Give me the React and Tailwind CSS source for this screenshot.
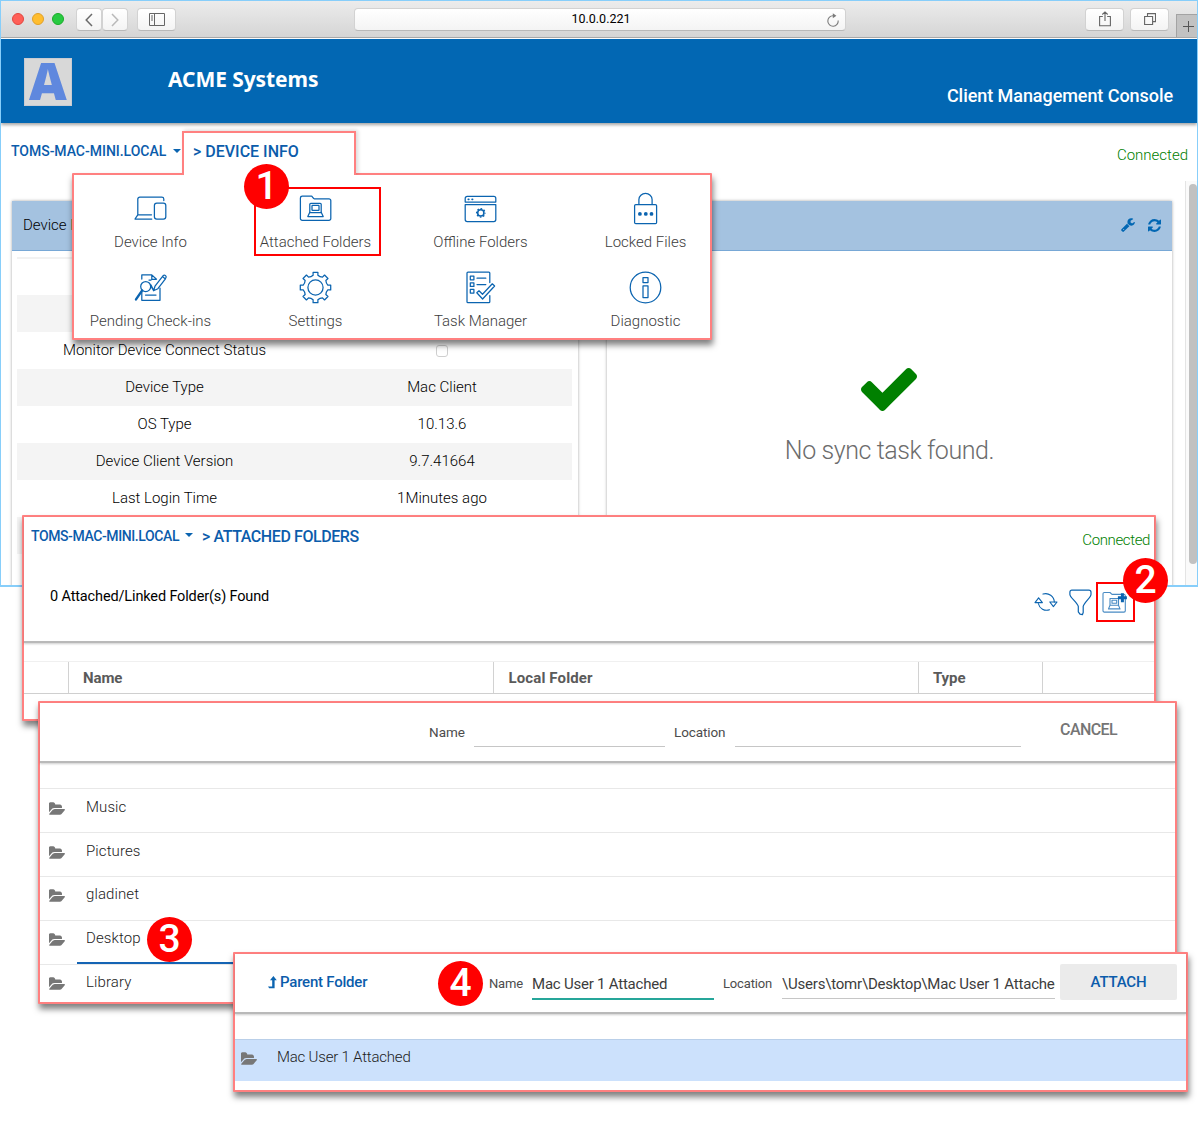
import React from "react";

const LINE = "#0b64b0";

/* ---------- icons ---------- */

function gearPath(cx, cy, outer, inner, teeth, half) {
  const pt = (r, deg) => {
    const a = (deg * Math.PI) / 180;
    return `${(cx + r * Math.sin(a)).toFixed(2)} ${(cy - r * Math.cos(a)).toFixed(2)}`;
  };
  const step = 360 / teeth;
  let d = `M${pt(outer, -half)}`;
  for (let i = 0; i < teeth; i++) {
    const a = i * step;
    d += ` L${pt(outer, a + half)} L${pt(inner + 0.5, a + half + 2)}`;
    d += ` Q${pt(inner - 0.6, a + step / 2)} ${pt(inner + 0.5, a + step - half - 2)}`;
    d += ` L${pt(outer, a + step - half)}`;
  }
  return d + "Z";
}

function Line({ children, w = 33, h = 33, sw = 1.25 }) {
  return (
    <svg
      width={w}
      height={h}
      viewBox={`0 0 ${w} ${h}`}
      fill="none"
      stroke={LINE}
      strokeWidth={sw}
      strokeLinejoin="round"
      strokeLinecap="round"
      className="block shrink-0"
    >
      {children}
    </svg>
  );
}

const DeviceIcon = () => (
  <Line>
    <path d="M29.8 8.5V7a2 2 0 0 0-2-1.9H5.8a2 2 0 0 0-2 2V22.6M3.8 22.8H17.5M3.8 22.8 1 27H17.8" />
    <rect x="20.4" y="11.2" width="11.4" height="16" rx="2.4" />
  </Line>
);

const FolderIcon = () => (
  <Line>
    <path d="M1.4 6a1.8 1.8 0 0 1 1.8-1.8h9.2c1 0 1.7 2.6 3 2.6h14.6a1.8 1.8 0 0 1 1.8 1.8V26.5a1.8 1.8 0 0 1-1.8 1.8H3.2a1.8 1.8 0 0 1-1.8-1.8z" />
    <path d="M10.800 20.300V12.300a1 1 0 0 1 1-1H21.200a1 1 0 0 1 1 1V20.300" />
    <rect x="13" y="13.400" width="7" height="5" rx=".5" />
    <path d="M10.800 20.300 8.800 24.500H24.200L22.200 20.300M10.800 20.600H22.200" />
  </Line>
);

const OfflineIcon = () => (
  <Line>
    <path d="M1.2 10V6.400a2 2 0 0 1 2-2H29.800a2 2 0 0 1 2 2V10z" />
    <path d="M1.2 12.600H31.800V27.600a2 2 0 0 1-2 2H3.200a2 2 0 0 1-2-2z" />
    <path d="M4.300 7.300h.5M8.100 7.300h.5" strokeWidth="1.700" />
    <circle cx="16.800" cy="20.900" r="3.100" strokeWidth="1.500" />
    <circle
      cx="16.800"
      cy="20.900"
      r="4.200"
      strokeWidth="1.300"
      strokeLinecap="butt"
      strokeDasharray="1.650 1.649"
      strokeDashoffset="0.800"
    />
  </Line>
);

const LockIcon = () => (
  <Line>
    <rect x="5.600" y="12.500" width="22" height="19.200" rx="1.200" />
    <path d="M9.900 12.300V7.500a6.600 6.100 0 0 1 13.200 0V12.300" />
    <g fill={LINE} stroke="none">
      <circle cx="10.900" cy="21.900" r="1.900" />
      <circle cx="16.800" cy="21.900" r="1.900" />
      <circle cx="22.500" cy="21.900" r="1.900" />
    </g>
  </Line>
);

const PendingIcon = () => (
  <Line>
    <path d="M7.800 8V3.900H17.800L22.500 8.200M17.800 3.900V8.400H22M7.800 20.500V29.300H26V17M11.500 24H22M15 9h2" />
    <circle cx="11.700" cy="15.600" r="5" />
    <path d="M8.200 19.400 2 28.400" strokeWidth="2.400" />
    <path d="M16.500 14.500l3 4.800L17 14M19.500 19.800l1.500-4.600 7.400-9.600 3 2.300-7.500 9.800zM28.400 5.600l.8-1c1.600-1.200 3.600.6 2.600 2.200l-.6.900" />
  </Line>
);

const SettingsIcon = () => (
  <Line>
    <path d={gearPath(16.5, 16.5, 15.4, 12, 8, 9)} />
    <circle cx="16.500" cy="16.500" r="7.600" />
  </Line>
);

const TaskIcon = () => (
  <Line>
    <path d="M25.800 11.500V2a1 1 0 0 0-1-1H4a1 1 0 0 0-1 1V30.700a1 1 0 0 0 1 1H24.800a1 1 0 0 0 1-1V24.500" />
    <path d="M6.300 5.200h3.600v3.600H6.300zM6.300 11.800h3.600v3.600H6.300zM6.300 18.400h3.600v3.600H6.300zM13 7.200h8.800M13 13.500h8.800" />
    <path d="M12.800 21.800l2.200-2 3.500 3.500L28.300 12.800l2.300 2.200L18.600 28z" />
  </Line>
);

const InfoIcon = () => (
  <Line>
    <circle cx="16.500" cy="16.500" r="15.300" />
    <rect x="14" y="6.600" width="5" height="5" />
    <rect x="14" y="14.900" width="5" height="11.600" />
  </Line>
);

const RefreshLineIcon = () => (
  <Line w={24} h={20} sw={1.1}>
    <path d="M9 2.100a8.600 8.600 0 0 1 11.300 8M15.500 17.800A8.600 8.600 0 0 1 4.300 11.500" />
    <path d="M4.600 5.800 1 10.600H8.400zM19.400 14.600 15.800 10H23z" />
  </Line>
);

const FilterIcon = () => (
  <Line w={23} h={27} sw={1.2}>
    <path d="M2.800 1.200H19.800C21 1.200 22 2 22 3.200V5.400C22 8.500 14.800 13.500 14.200 17.400V23.500L13.400 25.700 11 25.200 9.300 22.800V17.400C8.600 13.500.9 8.500.9 5.400V3.200C.9 2 1.800 1.200 2.800 1.200z" />
  </Line>
);

const AddFolderIcon = () => (
  <Line w={27} h={23} sw={1.1}>
    <g opacity="0.75">
      <path d="M1 2.800A1.300 1.300 0 0 1 2.300 1.500H8l2 1.900H22A1.300 1.300 0 0 1 23.300 4.700V19.800A1.300 1.300 0 0 1 22 21.100H2.300A1.300 1.300 0 0 1 1 19.800z" />
      <path d="M8 7.500h8.500v6.700H8zM10 9.200h4.700v3H10zM8 14.200 6.500 17.900H18L16.500 14.200" />
    </g>
    <path d="M20.400 2.200V11.200M15.900 6.700H24.900" strokeWidth="3" strokeLinecap="butt" />
  </Line>
);

function Glyph({ box, w, h, d, className }) {
  return (
    <svg width={w} height={h} viewBox={box} fill="currentColor" className={`block shrink-0 ${className || ""}`}>
      <path d={d} />
    </svg>
  );
}

const CHECK =
  "M1671 566q0 40-28 68l-724 724-136 136q-28 28-68 28t-68-28l-136-136-362-362q-28-28-28-68t28-68l136-136q28-28 68-28t68 28l294 295 656-657q28-28 68-28t68 28l136 136q28 28 28 68z";
const WRENCH =
  "M448 1472q0-26-19-45t-45-19-45 19-19 45 19 45 45 19 45-19 19-45zm644-420l-682 682q-37 37-90 37-52 0-91-37l-106-108q-38-36-38-90 0-53 38-91l681-681q39 98 114.500 173.500t173.500 114.500zm634-435q0 39-23 106-47 134-164.500 217.500t-258.500 83.500q-185 0-316.500-131.500t-131.500-316.500 131.500-316.500 316.500-131.500q58 0 121.500 16.500t107.500 46.500q16 11 16 28t-16 28l-293 169v224l193 107q5-3 79-48.500t135.500-81 70.500-35.500q15 0 23.500 10t8.500 25z";
const REFRESH =
  "M1639 1056q0 5-1 7-64 268-268 434.500t-478 166.500q-146 0-282.500-55t-243.500-157l-129 129q-19 19-45 19t-45-19-19-45v-448q0-26 19-45t45-19h448q26 0 45 19t19 45-19 45l-137 137q71 66 161 102t187 36q134 0 250-65t186-179q11-17 53-117 8-23 30-23h192q13 0 22.500 9.500t9.500 22.500zm25-800v448q0 26-19 45t-45 19h-448q-26 0-45-19t-19-45 19-45l138-138q-148-137-349-137-134 0-250 65t-186 179q-11 17-53 117-8 23-30 23h-199q-13 0-22.500-9.500t-9.500-22.500v-7q65-268 270-434.500t480-166.500q146 0 284 55.500t245 156.500l130-129q19-19 45-19t45 19 19 45z";
const FOLDER_OPEN =
  "M1815 952q0 31-31 66l-336 396q-43 51-120.500 86.500t-143.500 35.500h-1088q-34 0-60.500-13t-26.500-43q0-31 31-66l336-396q43-51 120.500-86.500t143.500-35.500h1088q34 0 60.500 13t26.500 43zm-343-344v160h-832q-94 0-197 47.500t-164 119.500l-337 396-5 6q0-4-.5-12.500t-.5-12.500v-960q0-92 66-158t158-66h320q92 0 158 66t66 158v32h544q92 0 158 66t66 158z";

const OpenFolder = () => (
  <Glyph box="0 128 1815 1408" w={16} h={13} d={FOLDER_OPEN} className="text-[#777777]" />
);

/* ---------- shared pieces ---------- */

function Badge({ n, className }) {
  return (
    <div
      className={`absolute z-30 flex h-[45px] w-[45px] items-center justify-center rounded-full bg-[#ff0000] text-[39px] leading-none font-medium text-white ${className}`}
    >
      {n}
    </div>
  );
}

function Caret({ className }) {
  return (
    <svg width="8" height="4" viewBox="0 0 8 4" className={`block shrink-0 ${className}`}>
      <path d="M0 0h8L4 4z" fill={LINE} />
    </svg>
  );
}

function ToolButton({ children, className }) {
  return (
    <div
      className={`flex h-[23px] items-center justify-center rounded-[4px] border border-[#d2d2d2] border-b-[#b9b9b9] bg-linear-to-b from-white to-[#f4f4f4] ${className}`}
    >
      {children}
    </div>
  );
}

const FLOAT =
  "absolute flex flex-col rounded-[1px] border-2 border-[#ff8080] bg-white shadow-[1px_5px_6px_rgba(0,0,0,0.5)]";

/* ---------- browser window ---------- */

function Toolbar() {
  return (
    <div className="flex h-[37px] items-start border-b border-[#a9a9a9] bg-linear-to-b from-[#ececec] to-[#d5d5d5]">
      <div className="mt-3 ml-[11px] flex gap-2">
        <div className="h-3 w-3 rounded-full border border-[#e2463f] bg-[#ff5f57]" />
        <div className="h-3 w-3 rounded-full border border-[#e0a029] bg-[#ffbd2e]" />
        <div className="h-3 w-3 rounded-full border border-[#1aab29] bg-[#28ca41]" />
      </div>
      <ToolButton className="mt-[7px] ml-3 w-[26px]">
        <svg width="8" height="14" viewBox="0 0 8 14" fill="none" stroke="#6b6b6b" strokeWidth="1.500">
          <path d="M7 1 1.200 7 7 13" />
        </svg>
      </ToolButton>
      <ToolButton className="mt-[7px] w-[26px]">
        <svg width="8" height="14" viewBox="0 0 8 14" fill="none" stroke="#b9b9b9" strokeWidth="1.500">
          <path d="M1 1 6.800 7 1 13" />
        </svg>
      </ToolButton>
      <ToolButton className="mt-[7px] ml-[9px] w-[39px]">
        <svg width="16" height="13" viewBox="0 0 16 13" fill="none" stroke="#666" strokeWidth="1">
          <path d="M.5.5h15v12H.5zM5.500.5v12M2 3h2M2 5h2M2 7h2" />
        </svg>
      </ToolButton>
      <ToolButton className="mt-[7px] ml-[178px] w-[492px]">
        <span className="flex-1 pl-[4px] text-center text-[12.500px] leading-none text-black">10.0.0.221</span>
        <svg width="13" height="14" viewBox="0 0 13 14" fill="none" stroke="#7a7a7a" strokeWidth="1.100" className="-ml-4 mr-[5px]">
          <path d="M11.200 7.500A5.200 5.200 0 1 1 6 2.800H7.500" />
          <path d="M5.800.3 9.400 2.800 5.800 5.300z" fill="#7a7a7a" stroke="none" />
        </svg>
      </ToolButton>
      <ToolButton className="mt-[7px] ml-[239px] w-[39px]">
        <svg width="12" height="16" viewBox="0 0 12 16" fill="none" stroke="#666" strokeWidth="1.100" className="-mt-0.5">
          <path d="M3.800 5.500H.6v9.300h10.800V5.500H8.200M6 10V1M3.300 3.500 6 .9 8.700 3.500" />
        </svg>
      </ToolButton>
      <ToolButton className="mt-[7px] ml-[6px] w-[39px]">
        <svg width="12" height="12" viewBox="0 0 12 12" fill="none" stroke="#666" strokeWidth="1.100" className="-mt-px">
          <path d="M.6 3.500h8v8h-8zM3.500 3.500V.6h8v8H8.600" />
        </svg>
      </ToolButton>
      <div className="mt-[13px] ml-[7px] flex h-[23px] flex-1 items-center justify-center border-t border-l border-[#a3a3a3] bg-[#c2c2c2] pl-0.5">
        <svg width="11" height="11" viewBox="0 0 11 11" stroke="#555" strokeWidth="1" className="shrink-0">
          <path d="M5.500 0v11M0 5.500h11" />
        </svg>
      </div>
    </div>
  );
}

function Header() {
  return (
    <div className="relative mt-px flex h-[84px] shrink-0 items-start bg-[#0267b3] text-white shadow-[0_2px_3px_rgba(0,0,0,0.35)]">
      <div className="mt-[19px] ml-[23px] flex h-12 w-12 items-center justify-center border border-[#c9cbd2] bg-[#d8d8d8]">
        <span className="-mt-[5px] font-['Open_Sans',sans-serif] text-[52px] leading-none font-extrabold text-[#5f88de]">
          A
        </span>
      </div>
      <span className="mt-[26px] ml-24 font-['Noto_Sans','Open_Sans',sans-serif] text-[21px] leading-7 font-bold tracking-[-0.08px]">
        ACME Systems
      </span>
      <span className="mt-[45px] mr-6 ml-auto text-[18px] leading-6 font-medium tracking-[-0.06px]">
        Client Management Console
      </span>
    </div>
  );
}

const ROWS = [
  ["", ""],
  ["", ""],
  ["Monitor Device Connect Status", "box"],
  ["Device Type", "Mac Client"],
  ["OS Type", "10.13.6"],
  ["Device Client Version", "9.7.41664"],
  ["Last Login Time", "1Minutes ago"],
  ["", ""],
];

function DeviceCard() {
  return (
    <div className="h-[400px] w-[566px] shrink-0 bg-white shadow-[0_0_3px_rgba(0,0,0,0.35)]">
      <div className="flex h-[50px] items-center border-b border-[#78a8d6] bg-[#a4c2e0] pl-[11px] text-[15px] font-light text-black">
        Device Info
      </div>
      <div className="mt-[6px] mr-[6px] ml-[5px] border-t-2 border-[#f2f2f2] text-[15px] leading-none font-light text-black">
        {ROWS.map(([label, value], i) => (
          <div key={i} className="flex h-[37px] items-center even:bg-[#f4f4f4] first:h-[36px]">
            <div className="w-[295px] text-center">{label}</div>
            <div className="flex w-[260px] justify-center">
              {value === "box" ? <div className="h-3 w-3 rounded-[3px] border border-[#cfcfcf]" /> : value}
            </div>
          </div>
        ))}
      </div>
    </div>
  );
}

function SyncCard() {
  return (
    <div className="flex h-[400px] w-[565px] shrink-0 flex-col items-center bg-white shadow-[0_0_3px_rgba(0,0,0,0.35)]">
      <div className="flex h-[50px] w-full items-center justify-end gap-[13px] border-b border-[#78a8d6] bg-[#a4c2e0] pr-[11px] pb-px text-[#0267b3]">
        <Glyph box="64 100 1680 1680" w={14} h={14} d={WRENCH} />
        <Glyph box="128 128 1536 1536" w={13} h={13} d={REFRESH} />
      </div>
      <Glyph box="121 334 1550 1188" w={56} h={43} d={CHECK} className="mt-[117px] mr-0.5 text-[#008000]" />
      <div className="mt-[24px] text-[25px] leading-8 font-light tracking-[-0.42px] text-[#6c6c6c]">No sync task found.</div>
    </div>
  );
}

function BrowserWindow() {
  return (
    <div className="absolute top-0 left-0 flex h-[587px] w-[1198px] flex-col overflow-hidden border border-b-2 border-[#87cefa] bg-white">
      <Toolbar />
      <Header />
      <div className="flex h-[58px] shrink-0 items-start pt-[20px] pl-[10px] leading-4">
        <span className="text-[14px] font-medium tracking-[-0.02px] text-[#0b5cab]">TOMS-MAC-MINI.LOCAL</span>
        <Caret className="mt-[6px] ml-[7px]" />
        <span className="mt-[4px] mr-[9px] ml-auto text-[15px] font-light text-[#008000]">Connected</span>
      </div>
      <div className="flex h-[405px]">
        <div className="flex flex-1 gap-[29px] pt-5 pl-[11px]">
          <DeviceCard />
          <SyncCard />
        </div>
        <div className="w-3 shrink-0 border-l border-[#e4e4e4] bg-[#fafafa] pt-[3px] pl-[3px]">
          <div className="h-[380px] w-2 rounded-full bg-[#c1c1c1]" />
        </div>
      </div>
    </div>
  );
}

/* ---------- step 1: section menu ---------- */

const MENU = [
  [DeviceIcon, "Device Info"],
  [FolderIcon, "Attached Folders"],
  [OfflineIcon, "Offline Folders"],
  [LockIcon, "Locked Files"],
  [PendingIcon, "Pending Check-ins"],
  [SettingsIcon, "Settings"],
  [TaskIcon, "Task Manager"],
  [InfoIcon, "Diagnostic"],
];

function SectionMenu() {
  return (
    <>
      <div className="absolute top-[173px] left-[72px] h-[167px] w-[640px] rounded-[1px] border-2 border-[#ff8080] bg-white shadow-[1px_5px_6px_rgba(0,0,0,0.5)]">
        <div className="-ml-[6px] grid w-[660px] grid-cols-4 pt-[17px]">
          {MENU.map(([Icon, label]) => (
            <div key={label} className="flex h-[79px] flex-col items-center">
              <Icon />
              <span className="mt-[8px] text-[15px] leading-[18px] font-light text-[#3c3c3c]">{label}</span>
            </div>
          ))}
        </div>
      </div>
      <div className="absolute top-[131px] left-[182px] h-[44px] w-[174px] border-2 border-b-0 border-[#ff8080] bg-white pt-[9px] pl-[9px] text-[16px] leading-5 font-medium text-[#0b5cab] shadow-[2px_-1px_4px_rgba(0,0,0,0.15)]">
        &gt; DEVICE INFO
      </div>
      <div className="absolute top-[175px] left-[184px] h-[5px] w-[180px] bg-white" />
      <div className="absolute top-[187px] left-[254px] h-[69px] w-[127px] border-2 border-[#ff0000]" />
      <Badge n="1" className="top-[164px] left-[244px]" />
    </>
  );
}

/* ---------- step 2: attached folders ---------- */

function AttachedFolders() {
  return (
    <div className={`${FLOAT} top-[515px] left-[22px] h-[206px] w-[1134px]`}>
      <div className="flex h-[126px] shrink-0 flex-col border-b-2 border-[#b9b9b9] shadow-[0_1px_2px_rgba(0,0,0,0.2)]">
        <div className="flex h-[52px] items-start pt-[9px] pr-1 pl-[7px] leading-5 font-medium text-[#0b5cab]">
          <span className="text-[14px] tracking-[-0.4px]">TOMS-MAC-MINI.LOCAL</span>
          <Caret className="mt-[7px] ml-[6px]" />
          <span className="mt-px ml-[9px] text-[16px] tracking-[-0.42px]">&gt; ATTACHED FOLDERS</span>
          <span className="mt-[4px] ml-auto text-[15px] font-light tracking-[-0.38px] text-[#008000]">Connected</span>
        </div>
        <div className="flex items-start pl-[26px]">
          <span className="mt-[18px] text-[14.500px] leading-5 tracking-[-0.14px] text-black">
            0 Attached/Linked Folder(s) Found
          </span>
          <div className="mt-[13px] mr-[19px] ml-auto flex items-center">
            <RefreshLineIcon />
            <div className="ml-[11px]">
              <FilterIcon />
            </div>
            <div className="ml-[4px] flex h-10 w-[39px] items-center border-2 border-[#ff0000] pl-[4px]">
              <AddFolderIcon />
            </div>
          </div>
        </div>
      </div>
      <div className="mt-[18px] flex h-[33px] border-t border-b border-t-[#f0f0f0] border-b-[#cfcfcf] text-[15px] leading-[32px] font-bold tracking-[-0.1px] text-[#5a5a5a]">
        <div className="w-[44px]" />
        <div className="w-[425px] border-l border-[#d2d2d2] pl-[14px]">Name</div>
        <div className="w-[425px] border-l border-[#d2d2d2] pl-[14.500px] tracking-[0.12px]">Local Folder</div>
        <div className="w-[124px] border-l border-[#d2d2d2] pl-[14px]">Type</div>
        <div className="flex-1 border-l border-[#d2d2d2]" />
      </div>
    </div>
  );
}

/* ---------- step 3: folder list ---------- */

function FolderRow({ name, active }) {
  return (
    <div className="relative flex h-[43.800px] shrink-0 items-start border-t border-[#e8e8e8]">
      <div className="mt-[12.500px] ml-[9px]">
        <OpenFolder />
      </div>
      <span className="mt-[7.500px] ml-[21px] text-[15px] leading-5 font-light tracking-[0.1px] text-[#222]">{name}</span>
      {active && <div className="absolute right-0 bottom-0 left-[37px] h-[2px] bg-[#1464b4]" />}
    </div>
  );
}

function FolderPicker() {
  return (
    <div className={`${FLOAT} top-[701px] left-[38px] h-[303px] w-[1139px]`}>
      <div className="mb-[25.400px] flex h-[60px] shrink-0 items-start border-b-2 border-[#b9b9b9] text-[13.500px] leading-5 text-[#4c4c4c] shadow-[0_1px_2px_rgba(0,0,0,0.2)]">
        <div className="mt-[19px] ml-[389px] w-[45px]">Name</div>
        <div className="mt-[43px] h-px w-[191px] bg-[#c6c6c6]" />
        <div className="mt-[19px] ml-[9px] w-[61px] tracking-[-0.1px]">Location</div>
        <div className="mt-[43px] h-px w-[286px] bg-[#c6c6c6]" />
        <span className="mt-[17px] mr-[58px] ml-auto text-[16px] font-medium tracking-[-0.6px] text-[#757575]">CANCEL</span>
      </div>
      <div className="flex flex-1 flex-col overflow-hidden">
        <FolderRow name="Music" />
        <FolderRow name="Pictures" />
        <FolderRow name="gladinet" />
        <FolderRow name="Desktop" active />
        <FolderRow name="Library" />
      </div>
    </div>
  );
}

/* ---------- step 4: attach form ---------- */

function AttachForm() {
  return (
    <div className={`${FLOAT} top-[952px] left-[233px] h-[140px] w-[955px]`}>
      <div className="flex h-[60px] shrink-0 items-start border-b-2 border-[#b9b9b9] leading-5 shadow-[0_1px_2px_rgba(0,0,0,0.2)]">
        <svg width="9" height="13" viewBox="0 0 9 13" className="mt-[22px] ml-[33px]">
          <path d="M5.400 0 8.800 4.200H6.600V12.300H1.200L0 10.400H4.200V4.200H2z" fill={LINE} />
        </svg>
        <div className="mt-[18px] ml-[3px] w-[209px] text-[15px] font-medium tracking-[-0.22px] text-[#0b5cab]">
          Parent Folder
        </div>
        <div className="mt-[20px] w-[43px] text-[13px] tracking-[-0.15px] text-[#4c4c4c]">Name</div>
        <div className="mt-[20px] h-[26px] w-[182px] border-b-2 border-[#26a69a] text-[15px] tracking-[-0.22px] text-[#3c3c3c]">
          Mac User 1 Attached
        </div>
        <div className="mt-[20px] ml-[9px] w-[59px] text-[13px] tracking-[-0.15px] text-[#4c4c4c]">Location</div>
        <div className="mt-[20px] h-[25px] w-[273px] overflow-hidden border-b border-[#c6c6c6] text-[15px] tracking-[-0.2px] text-[#3c3c3c]">
          \Users\tomr\Desktop\Mac User 1 Attached
        </div>
        <div className="mt-[10px] ml-[5px] flex h-9 w-[117px] items-center justify-center rounded-[2px] bg-[#ebebeb] text-[15px] font-medium tracking-[-0.2px] text-[#0b5cab]">
          ATTACH
        </div>
      </div>
      <div className="mt-[25px] flex h-[42px] items-start border-t border-[#b9cfe9] bg-[#cce1fc]">
        <div className="mt-[12px] ml-[6px]">
          <OpenFolder />
        </div>
        <span className="mt-[7px] ml-5 text-[15px] leading-5 font-light tracking-[-0.2px] text-[#222]">
          Mac User 1 Attached
        </span>
      </div>
    </div>
  );
}

export default function App() {
  return (
    <div className="relative h-[1122px] w-[1198px] overflow-hidden bg-white font-['Roboto',sans-serif] whitespace-nowrap">
      <BrowserWindow />
      <SectionMenu />
      <AttachedFolders />
      <Badge n="2" className="top-[558px] left-[1123px]" />
      <FolderPicker />
      <Badge n="3" className="top-[917px] left-[147px]" />
      <AttachForm />
      <Badge n="4" className="top-[961px] left-[438px]" />
    </div>
  );
}
